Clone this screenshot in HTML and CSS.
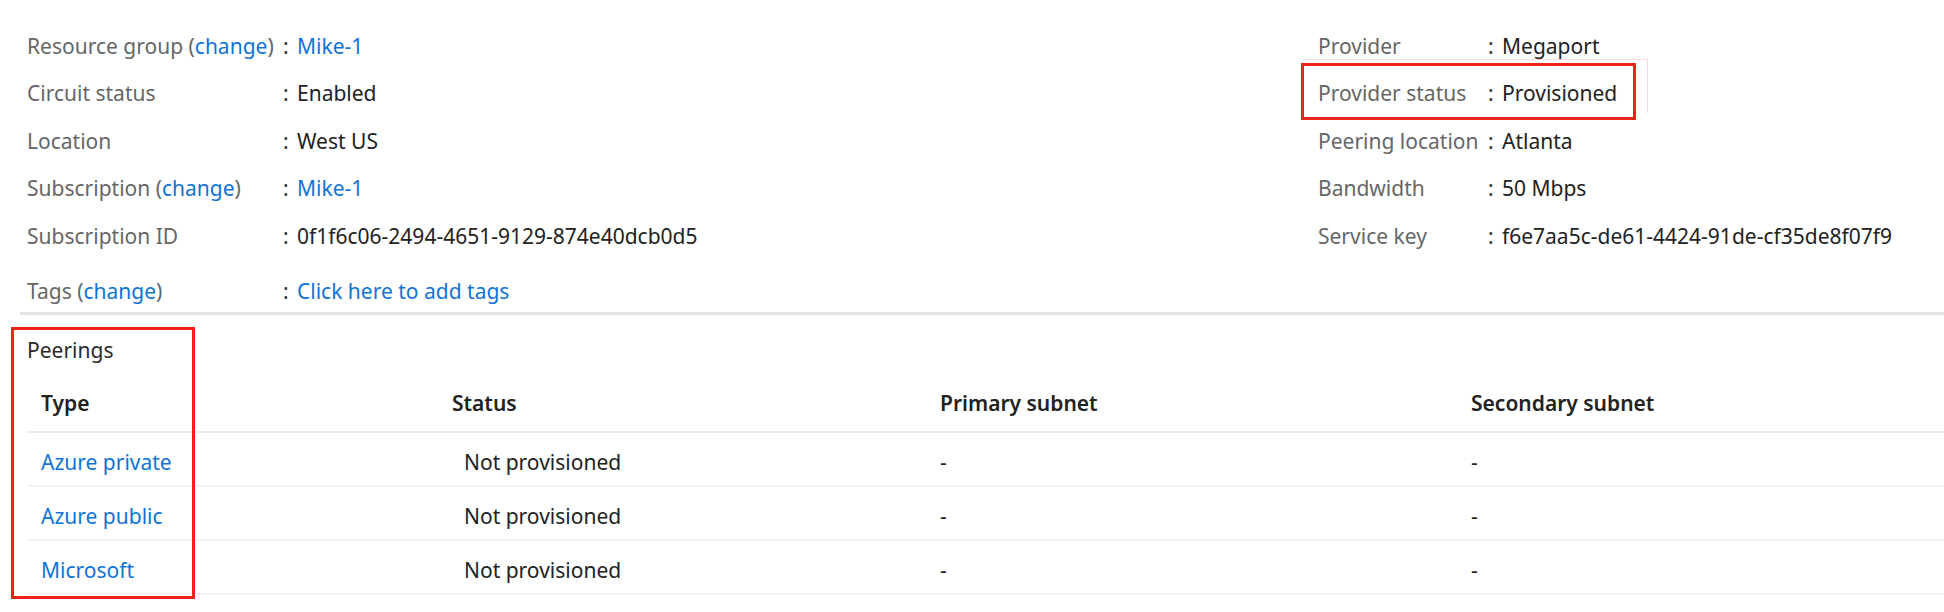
FILE: index.html
```html
<!DOCTYPE html>
<html lang="en">
<head>
<meta charset="utf-8">
<title>ExpressRoute circuit</title>
<link rel="stylesheet" href="styles.css">
</head>
<body>
<div class="page">
  <section class="essentials">
    <div class="col col-left">
      <div class="row"><span class="label">Resource group (<a class="link">change</a>)</span><span class="colon">:</span><a class="value link">Mike-1</a></div>
      <div class="row"><span class="label">Circuit status</span><span class="colon">:</span><span class="value">Enabled</span></div>
      <div class="row"><span class="label">Location</span><span class="colon">:</span><span class="value">West US</span></div>
      <div class="row"><span class="label">Subscription (<a class="link">change</a>)</span><span class="colon">:</span><a class="value link">Mike-1</a></div>
      <div class="row"><span class="label">Subscription ID</span><span class="colon">:</span><span class="value">0f1f6c06-2494-4651-9129-874e40dcb0d5</span></div>
      <div class="row row-tags"><span class="label">Tags (<a class="link">change</a>)</span><span class="colon">:</span><a class="value link">Click here to add tags</a></div>
    </div>
    <div class="col col-right">
      <div class="row"><span class="label">Provider</span><span class="colon">:</span><span class="value">Megaport</span></div>
      <div class="row"><span class="label">Provider status</span><span class="colon">:</span><span class="value">Provisioned</span></div>
      <div class="row"><span class="label">Peering location</span><span class="colon">:</span><span class="value">Atlanta</span></div>
      <div class="row"><span class="label">Bandwidth</span><span class="colon">:</span><span class="value">50 Mbps</span></div>
      <div class="row"><span class="label">Service key</span><span class="colon">:</span><span class="value">f6e7aa5c-de61-4424-91de-cf35de8f07f9</span></div>
    </div>
    <div class="ghost-box"></div>
    <div class="highlight highlight-status"></div>
  </section>

  <section class="peerings">
    <h2 class="peerings-title">Peerings</h2>
    <table class="grid">
      <thead>
        <tr><th class="c-type">Type</th><th class="c-status">Status</th><th class="c-primary">Primary subnet</th><th class="c-secondary">Secondary subnet</th></tr>
      </thead>
      <tbody>
        <tr><td><a class="link">Azure private</a></td><td class="status">Not provisioned</td><td>-</td><td>-</td></tr>
        <tr><td><a class="link">Azure public</a></td><td class="status">Not provisioned</td><td>-</td><td>-</td></tr>
        <tr><td><a class="link">Microsoft</a></td><td class="status">Not provisioned</td><td>-</td><td>-</td></tr>
      </tbody>
    </table>
    <div class="highlight highlight-peerings"></div>
  </section>
</div>
</body>
</html>
```
FILE: styles.css
```css
html, body {
  margin: 0;
  padding: 0;
  background: #ffffff;
}
body {
  font-family: "Noto Sans", "Open Sans", "Liberation Sans", sans-serif;
  font-size: 21px;
  color: #222222;
  width: 1944px;
  height: 612px;
  overflow: hidden;
}
.page {
  position: relative;
}
.link {
  color: #1173d4;
  text-decoration: none;
  cursor: pointer;
}
.essentials {
  position: relative;
  display: grid;
  grid-template-columns: 1298px 1fr;
  padding-top: 22px;
  margin-left: 20px;
  border-bottom: 3px solid #e3e3e3;
}
.col-left {
  padding-left: 7px;
}
.row {
  display: grid;
  height: 47.5px;
  align-items: center;
}
.col-left .row {
  grid-template-columns: 256px 14px auto;
}
.col-right .row {
  grid-template-columns: 170px 14px auto;
}
.row-tags {
  height: 41px;
  margin-top: 11px;
}
.label {
  color: #666666;
  white-space: nowrap;
}
.colon {
  color: #333333;
}
.value {
  color: #222222;
  white-space: nowrap;
}
a.value {
  color: #1173d4;
}
.highlight {
  position: absolute;
  border: 3px solid #f0211c;
  box-sizing: border-box;
  pointer-events: none;
}
.highlight-status {
  left: 1281px;
  top: 63px;
  width: 335px;
  height: 57px;
}
.ghost-box {
  position: absolute;
  left: 1283px;
  top: 59px;
  width: 345px;
  height: 54px;
  border-top: 1px solid #fbd9d9;
  border-right: 1px solid #fbd9d9;
  box-sizing: border-box;
}
.peerings {
  position: relative;
  padding-top: 20px;
}
.peerings-title {
  margin: 0 0 0 27px;
  font-size: 21px;
  font-weight: 400;
  line-height: 30px;
  color: #2b2b2b;
}
.grid {
  margin-left: 27px;
  margin-top: 11px;
  width: 1917px;
  border-collapse: collapse;
  table-layout: fixed;
}
.grid th,
.grid td {
  box-sizing: border-box;
  text-align: left;
  white-space: nowrap;
  vertical-align: middle;
}
.grid th {
  font-weight: 600;
  color: #222222;
  height: 56px;
  padding: 0 0 0 14px;
  border-bottom: 2px solid #ececec;
}
.grid td {
  height: 54px;
  padding: 6px 0 0 14px;
  border-bottom: 2px solid #f1f1f1;
}
.grid td.status {
  padding-left: 26px;
}
.c-type { width: 411px; }
.c-status { width: 488px; }
.c-primary { width: 531px; }
.c-secondary { width: auto; }
.highlight-peerings {
  left: 11px;
  top: 12px;
  width: 184px;
  height: 272px;
}
```
